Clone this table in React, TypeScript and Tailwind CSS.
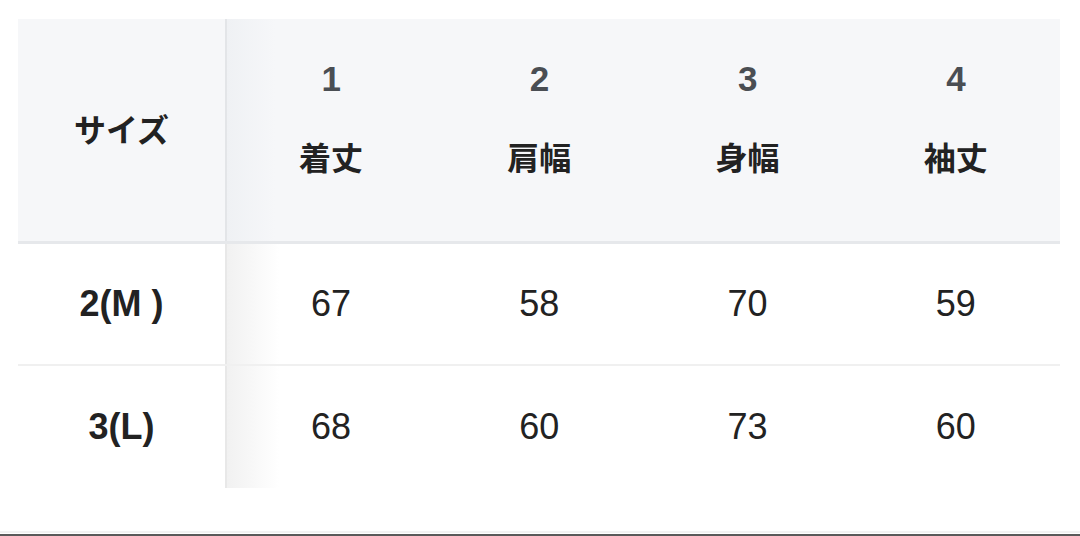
const headers = [
  { no: '1', label: '着丈' },
  { no: '2', label: '肩幅' },
  { no: '3', label: '身幅' },
  { no: '4', label: '袖丈' },
];

const rows = [
  { size: '2(M )', values: ['67', '58', '70', '59'] },
  { size: '3(L)', values: ['68', '60', '73', '60'] },
];

const font = { fontFamily: '"Liberation Sans", "Noto Sans CJK JP", sans-serif' };

export default function App() {
  return (
    <div className="h-[536px] w-[1080px] bg-white flex flex-col text-[#222]" style={font}>
      <div className="mt-[19px] ml-[18px] w-[1042px]">
        {/* header */}
        <div className="flex h-[225px] bg-[#f6f7f9] border-b-[3px] border-[#e6e8eb]">
          <div className="w-[209px] shrink-0 flex items-center justify-center border-r-2 border-[#e3e5e8] pt-[2px]">
            <span className="text-[32px] font-bold leading-none">サイズ</span>
          </div>
          <div className="flex-1 flex bg-[linear-gradient(to_right,#eff1f4,#f6f7f9_48px)]">
            {headers.map((h) => (
              <div key={h.no} className="flex-1 flex flex-col items-center pt-[40px] gap-[40px]">
                <span className="h-[40px] flex items-center text-[35px] font-bold text-[#4a4e53]">{h.no}</span>
                <span className="h-[40px] flex items-center text-[32px] font-bold">{h.label}</span>
              </div>
            ))}
          </div>
        </div>
        {/* body */}
        {rows.map((r, i) => (
          <div
            key={r.size}
            className={`flex h-[122px] ${i === 0 ? 'border-b-2 border-[#f0f0f0]' : ''}`}
          >
            <div className="w-[209px] shrink-0 flex items-center justify-center border-r-2 border-[#e8e8e8]">
              <span className="text-[36px] font-bold leading-none">{r.size}</span>
            </div>
            <div className="flex-1 flex bg-[linear-gradient(to_right,#f1f1f1,#ffffff_52px)]">
              {r.values.map((v, j) => (
                <div key={j} className="flex-1 flex items-center justify-center">
                  <span className="text-[36px] leading-none">{v}</span>
                </div>
              ))}
            </div>
          </div>
        ))}
      </div>
      <div className="flex-1" />
      <div className="h-[2px] bg-[#f2f2f2] mb-[1px]" />
      <div className="h-[2px] bg-[#5a5a5a]" />
    </div>
  );
}
